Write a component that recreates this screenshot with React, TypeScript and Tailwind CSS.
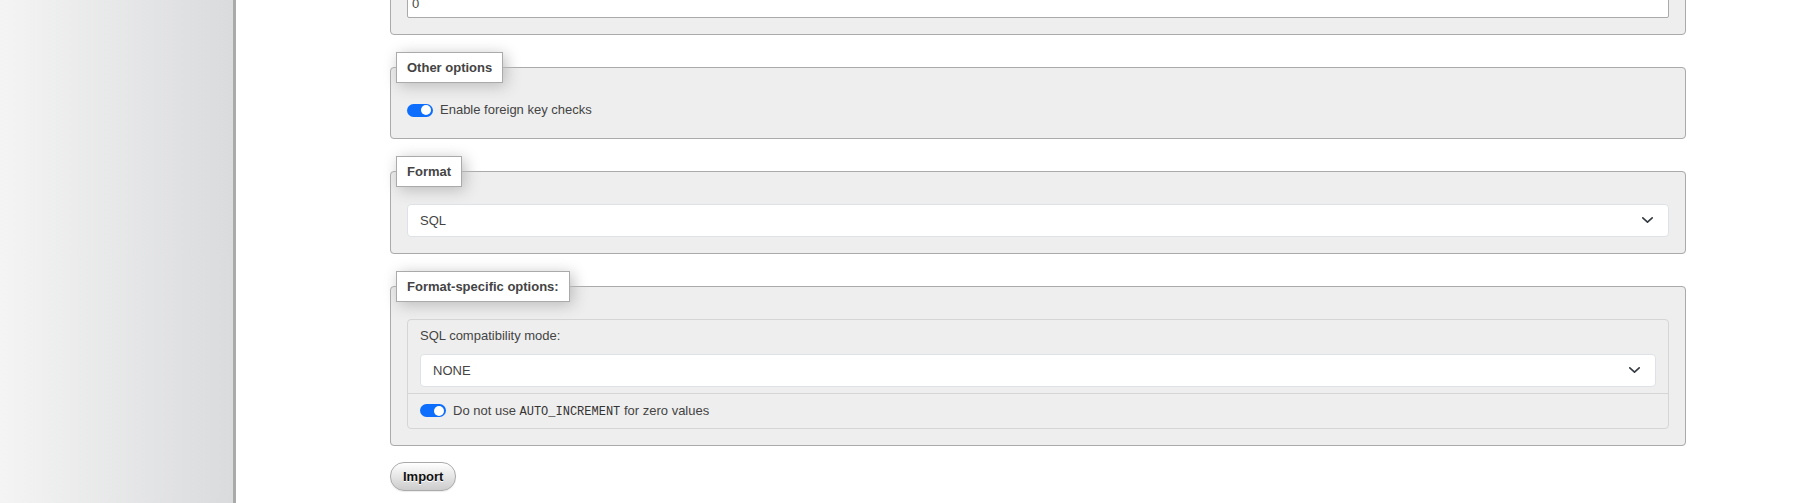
import React from "react";

function Chevron() {
  return (
    <svg width="11" height="6" viewBox="0 0 11 6" fill="none" className="shrink-0">
      <polyline
        points="0.8,0.8 5.5,5.2 10.2,0.8"
        stroke="#343a40"
        strokeWidth="1.6"
        strokeLinecap="round"
        strokeLinejoin="round"
      />
    </svg>
  );
}

function SelectBox({ value }: { value: string }) {
  return (
    <div className="flex h-[33px] items-center justify-between rounded-[4px] border border-[#dee2e6] bg-white pl-[12px] pr-[15px] pb-[1px] leading-[19px] text-[#444]">
      <span>{value}</span>
      <Chevron />
    </div>
  );
}

function Toggle() {
  return (
    <div className="flex h-[13px] w-[26px] shrink-0 items-center justify-end rounded-full bg-[#0d6efd] pr-[2px]">
      <div className="h-[10px] w-[10px] rounded-full bg-white" />
    </div>
  );
}

function Legend({ children }: { children: React.ReactNode }) {
  return (
    <legend className="-ml-[11px] border border-[#aaa] bg-white px-[10px] py-[5px] font-bold leading-[19px] text-[#444] shadow-[3px_3px_15px_#bbb]">
      {children}
    </legend>
  );
}

export default function App() {
  return (
    <div className="flex h-[503px] overflow-hidden bg-white font-['Liberation_Sans',Arial,sans-serif] text-[13px] text-[#444]">
      <aside className="h-full w-[236px] shrink-0 border-r-[3px] border-[#aaa] bg-[linear-gradient(to_right,#f4f4f4,#dadbdd)]" />
      <main className="flex-1 pl-[154px] pr-[113px]">
        {/* partially visible fieldset at top */}
        <div className="-mt-[26px] rounded-[4px] border border-[#aaa] bg-[#eee] px-4 pt-4 pb-4">
          <div className="flex h-[27px] items-end rounded-[2px] border border-[#aaa] bg-white pb-[6px] pl-[4px] leading-[15px] text-[#444]">
            0
          </div>
        </div>

        <fieldset className="mt-[17px] rounded-[4px] border border-[#aaa] bg-[#eee] px-4 pt-[17px] pb-[18px]">
          <Legend>Other options</Legend>
          <div className="flex h-[20px] items-center gap-[7px]">
            <Toggle />
            <span>Enable foreign key checks</span>
          </div>
        </fieldset>

        <fieldset className="mt-[17px] rounded-[4px] border border-[#aaa] bg-[#eee] px-4 pt-[17px] pb-4">
          <Legend>Format</Legend>
          <SelectBox value="SQL" />
        </fieldset>

        <fieldset className="mt-[17px] rounded-[4px] border border-[#aaa] bg-[#eee] px-4 pt-[17px] pb-4">
          <Legend>Format-specific options:</Legend>
          <div className="rounded-[4px] border border-[#d5d5d5]">
            <div className="px-[12px] pt-[6px] pb-[6px]">
              <div className="mb-[8px] leading-[20px]">SQL compatibility mode:</div>
              <SelectBox value="NONE" />
            </div>
            <div className="flex h-[35px] items-center gap-[7px] border-t border-[#d5d5d5] px-[12px] pb-[1px]">
              <Toggle />
              <span>
                Do not use{" "}
                <code className="font-['Liberation_Mono','DejaVu_Sans_Mono',monospace] text-[12px] text-[#333]">
                  AUTO_INCREMENT
                </code>{" "}
                for zero values
              </span>
            </div>
          </div>
        </fieldset>

        <button
          type="button"
          className="mt-[16px] flex h-[29px] items-center rounded-[14px] border border-[#aaa] bg-[linear-gradient(#fff,#ccc)] px-[12px] font-bold text-[#111] shadow-[0_1px_1px_rgba(0,0,0,0.08)] [text-shadow:0_1px_0_#fff]"
        >
          Import
        </button>
      </main>
    </div>
  );
}
